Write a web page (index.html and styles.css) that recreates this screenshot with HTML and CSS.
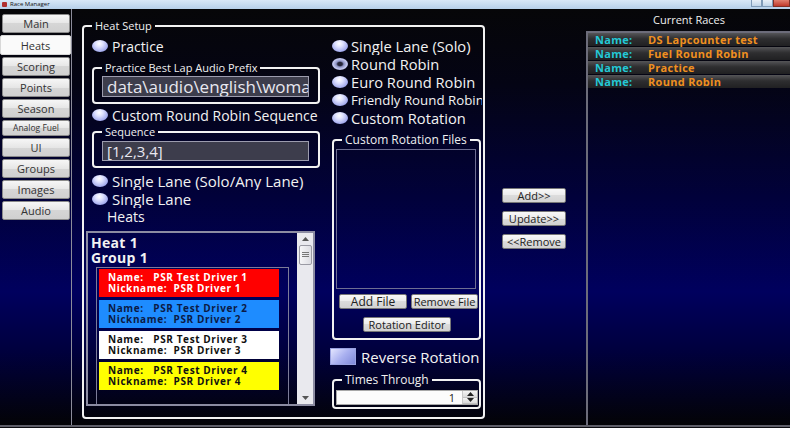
FILE: index.html
```html
<!DOCTYPE html>
<html lang="en">
<head>
    <meta charset="UTF-8">
    <title>Race Manager</title>
    <link rel="stylesheet" href="styles.css">
</head>
<body>

    <div class="titlebar">
        <span class="app-icon"></span>
        <span class="app-title">Race Manager</span>
        <div class="caption">
            <span class="cap-btn"></span>
            <span class="cap-btn"></span>
            <span class="cap-btn cap-close"></span>
        </div>
    </div>

    <div class="window">
        <nav class="tabs">
            <button class="tab">Main</button>
            <button class="tab active">Heats</button>
            <button class="tab">Scoring</button>
            <button class="tab">Points</button>
            <button class="tab">Season</button>
            <button class="tab tab-small">Analog Fuel</button>
            <button class="tab">UI</button>
            <button class="tab">Groups</button>
            <button class="tab">Images</button>
            <button class="tab">Audio</button>
        </nav>

        <div class="content">
            <fieldset class="group heat-setup">
                <legend>Heat Setup</legend>
                <div class="setup-cols">

                    <!-- left column -->
                    <div class="col-left">
                        <label class="radio-row"><span class="radio"></span>Practice</label>
                        <fieldset class="group prefix-group">
                            <legend>Practice Best Lap Audio Prefix</legend>
                            <div class="textbox">data\audio\english\woman</div>
                        </fieldset>
                        <label class="radio-row"><span class="radio"></span>Custom Round Robin Sequence</label>
                        <fieldset class="group sequence-group">
                            <legend>Sequence</legend>
                            <div class="textbox seq">[1,2,3,4]</div>
                        </fieldset>
                        <label class="radio-row wide gap-top"><span class="radio"></span>Single Lane (Solo/Any Lane)</label>
                        <label class="radio-row wide"><span class="radio"></span>Single Lane</label>
                        <div class="heats-label">Heats</div>

                        <div class="listbox">
                            <div class="list-body">
                                <div class="heat-title">Heat 1</div>
                                <div class="heat-title">Group 1</div>
                                <div class="group-box">
                                    <div class="driver red">
                                        <div class="line">Name:   PSR Test Driver 1</div>
                                        <div class="line">Nickname:  PSR Driver 1</div>
                                    </div>
                                    <div class="driver blue">
                                        <div class="line">Name:   PSR Test Driver 2</div>
                                        <div class="line">Nickname:  PSR Driver 2</div>
                                    </div>
                                    <div class="driver white">
                                        <div class="line">Name:   PSR Test Driver 3</div>
                                        <div class="line">Nickname:  PSR Driver 3</div>
                                    </div>
                                    <div class="driver yellow">
                                        <div class="line">Name:   PSR Test Driver 4</div>
                                        <div class="line">Nickname:  PSR Driver 4</div>
                                    </div>
                                </div>
                            </div>
                            <div class="scrollbar">
                                <span class="sb-arrow">
                                    <svg width="7" height="4" viewBox="0 0 7 4"><path d="M0 4 L3.5 0 L7 4 Z" fill="#555"/></svg>
                                </span>
                                <span class="sb-thumb">
                                    <svg width="7" height="6" viewBox="0 0 7 6"><path d="M0 0.5 H7 M0 2.5 H7 M0 4.5 H7" stroke="#777" stroke-width="1"/></svg>
                                </span>
                                <span class="sb-fill"></span>
                                <span class="sb-arrow">
                                    <svg width="7" height="4" viewBox="0 0 7 4"><path d="M0 0 L3.5 4 L7 0 Z" fill="#555"/></svg>
                                </span>
                            </div>
                        </div>
                    </div>

                    <!-- right column -->
                    <div class="col-right">
                        <label class="radio-row"><span class="radio"></span>Single Lane (Solo)</label>
                        <label class="radio-row"><span class="radio checked"></span>Round Robin</label>
                        <label class="radio-row"><span class="radio"></span>Euro Round Robin</label>
                        <label class="radio-row small"><span class="radio"></span>Friendly Round Robin</label>
                        <label class="radio-row"><span class="radio"></span>Custom Rotation</label>

                        <fieldset class="group rotation-group">
                            <legend>Custom Rotation Files</legend>
                            <div class="files-list"></div>
                            <div class="file-btns">
                                <button class="btn add-file">Add File</button>
                                <button class="btn remove-file">Remove File</button>
                            </div>
                            <button class="btn rotation-editor">Rotation Editor</button>
                        </fieldset>

                        <label class="check-row"><span class="checkbox"></span>Reverse Rotation</label>

                        <fieldset class="group times-group">
                            <legend>Times Through</legend>
                            <div class="numeric">
                                <span class="num-value">1</span>
                                <span class="spinner">
                                    <span class="spin">
                                        <svg width="7" height="4" viewBox="0 0 7 4"><path d="M0 4 L3.5 0 L7 4 Z" fill="#222"/></svg>
                                    </span>
                                    <span class="spin">
                                        <svg width="7" height="4" viewBox="0 0 7 4"><path d="M0 0 L3.5 4 L7 0 Z" fill="#222"/></svg>
                                    </span>
                                </span>
                            </div>
                        </fieldset>
                    </div>

                </div>
            </fieldset>

            <div class="move-btns">
                <button class="btn">Add&gt;&gt;</button>
                <button class="btn">Update&gt;&gt;</button>
                <button class="btn">&lt;&lt;Remove</button>
            </div>
        </div>

        <aside class="races">
            <div class="races-title">Current Races</div>
            <ul class="race-list">
                <li class="race"><span class="race-key">Name:</span><span class="race-name">DS Lapcounter test</span></li>
                <li class="race"><span class="race-key">Name:</span><span class="race-name">Fuel Round Robin</span></li>
                <li class="race"><span class="race-key">Name:</span><span class="race-name">Practice</span></li>
                <li class="race"><span class="race-key">Name:</span><span class="race-name">Round Robin</span></li>
            </ul>
        </aside>
    </div>

</body>
</html>
```

FILE: styles.css
```css
/* General styling */
* {
    box-sizing: border-box;
}

html, body {
    margin: 0;
    padding: 0;
}

body {
    width: 790px;
    height: 428px;
    overflow: hidden;
    background: #0b0b10;
    font-family: "Open Sans", Arial, sans-serif;
    color: #f2f2f2;
}

/* Window title bar */
.titlebar {
    height: 9px;
    display: flex;
    align-items: center;
    padding-left: 2px;
    background: linear-gradient(#d8e8f7, #b6d0ea);
    color: #111;
    font-size: 6px;
    line-height: 9px;
}

.app-icon {
    width: 5px;
    height: 5px;
    margin-right: 3px;
    background: #b03030;
    border-radius: 1px;
}

.caption {
    margin-left: auto;
    display: flex;
    height: 8px;
    align-self: flex-start;
}

.cap-btn {
    width: 11px;
    height: 7px;
    border: 1px solid #7f9bb8;
    border-top: none;
    background: linear-gradient(#e8f0f8, #c0d4e8);
}

.cap-close {
    width: 17px;
    background: linear-gradient(#e08070, #c0392b);
    border-color: #803028;
}

/* Main window body */
.window {
    display: flex;
    height: 418px;
    border-bottom: 2px solid #5e5e68;
    background: linear-gradient(to bottom, #060608 0%, #040414 18%, #01013a 45%, #00005e 68%, #00003e 82%, #030306 100%);
}

/* Left tabs */
.tabs {
    width: 72px;
    flex: none;
    display: flex;
    flex-direction: column;
    gap: 2px;
    padding-top: 5px;
    padding-left: 2px;
    border-right: 1px solid #8c8c9a;
}

.tab {
    width: 68px;
    height: 19px;
    padding: 0;
    border: 1px solid #8a8a8a;
    border-radius: 2px;
    background: linear-gradient(#f6f6f6, #e6e6e6 50%, #d6d6d6 50%, #d0d0d0);
    font-family: "Open Sans", Arial, sans-serif;
    font-size: 11px;
    color: #333;
    line-height: 17px;
}

.tab.active {
    width: 71px;
    height: 20px;
    margin-left: -2px;
    border-color: #d8d8d8;
    background: #fafafa;
}

.tab-small {
    height: 16px;
    font-size: 8.5px;
    line-height: 14px;
}

.content {
    flex: 1;
    display: flex;
    align-items: flex-start;
    padding-top: 11px;
    padding-left: 10px;
}

/* Group boxes */
.group {
    margin: 0;
    min-width: 0;
    border: 2px solid #f2f2f2;
    border-radius: 4px;
}

.group legend {
    padding: 0 3px;
    font-size: 11px;
    line-height: 12px;
    color: #f0f0f0;
}

.heat-setup {
    width: 403px;
    height: 399px;
    padding: 5px 1px 0 2px;
}

.heat-setup > legend {
    margin-left: 6px;
}

.setup-cols {
    display: flex;
    gap: 10px;
}

.col-left {
    width: 234px;
    display: flex;
    flex-direction: column;
}

.col-right {
    width: 152px;
    display: flex;
    flex-direction: column;
}

/* Radios */
.radio-row {
    display: flex;
    align-items: center;
    gap: 4px;
    height: 18px;
    font-size: 14px;
    white-space: nowrap;
    overflow: hidden;
}

.col-left .radio-row {
    margin-left: 6px;
}

.col-right .radio-row {
    margin-left: 2px;
    gap: 3px;
    font-size: 14.7px;
}

.col-right .radio-row.small {
    font-size: 13.3px;
}

.radio-row.wide {
    font-size: 15px;
}

.radio-row.gap-top {
    margin-top: 4px;
}

.radio {
    flex: none;
    width: 16px;
    height: 12px;
    border-radius: 50%;
    background: radial-gradient(ellipse at 45% 30%, #ffffff 0%, #dfe2ff 30%, #9ca4ec 75%, #7a84d4 100%);
}

.radio.checked {
    background: radial-gradient(ellipse at 50% 50%, #26263a 0, #26263a 20%, #8d93c4 34%, #c4c8ee 60%, #8a92cc 100%);
}

/* Text boxes */
.prefix-group,
.sequence-group {
    margin-left: 6px;
    width: 228px;
    padding: 0 2px 5px 8px;
}

.prefix-group {
    margin-top: 7px;
    margin-bottom: 2px;
}

.prefix-group > legend,
.sequence-group > legend {
    margin-left: 0;
}

.sequence-group {
    margin-top: 2px;
}

.textbox {
    margin-top: 2px;
    width: 207px;
    height: 21px;
    padding-left: 4px;
    border: 1px solid #9c9cae;
    background: #3d3d4c;
    color: #e8e8f0;
    font-size: 17px;
    line-height: 19px;
    white-space: nowrap;
    overflow: hidden;
}

.textbox.seq {
    margin-top: 3px;
    height: 20px;
    font-size: 15px;
    line-height: 18px;
}

.heats-label {
    height: 18px;
    margin-left: 21px;
    font-size: 14px;
    line-height: 18px;
}

/* Heats list */
.listbox {
    margin-top: 5px;
    width: 229px;
    height: 175px;
    display: flex;
    border: 2px solid #8c8ca2;
}

.list-body {
    flex: 1;
    overflow: hidden;
    padding: 2px 0 0 3px;
}

.heat-title {
    font-size: 14px;
    font-weight: 700;
    line-height: 15px;
    letter-spacing: 0.3px;
}

.group-box {
    margin: 2px 0 0 5px;
    width: 193px;
    height: 160px;
    padding: 1px 2px;
    border: 1px solid #7c7c98;
}

.driver {
    width: 180px;
    height: 28px;
    margin-bottom: 3px;
    padding: 3px 0 0 9px;
    font-size: 10px;
    font-weight: 700;
    line-height: 11px;
    letter-spacing: 0.6px;
}

.driver .line {
    height: 11px;
    white-space: pre;
}

.driver.red { background: #ff0000; color: #ffffff; }
.driver.blue { background: #1e8cff; color: #0c1a44; }
.driver.white { background: #ffffff; color: #111111; }
.driver.yellow { background: #ffff00; color: #111111; }

.scrollbar {
    width: 16px;
    flex: none;
    display: flex;
    flex-direction: column;
    align-items: center;
    background: #e9e9ee;
}

.sb-arrow {
    height: 12px;
    display: flex;
    align-items: center;
}

.sb-thumb {
    width: 13px;
    height: 20px;
    display: flex;
    align-items: center;
    justify-content: center;
    border: 1px solid #9a9aa4;
    border-radius: 2px;
    background: linear-gradient(to right, #f6f6f8, #dcdce2);
}

.sb-fill {
    flex: 1;
}

/* Rotation files */
.rotation-group {
    margin: 7px 0 0 2px;
    width: 149px;
    padding: 0 0 6px 2px;
}

.rotation-group > legend,
.times-group > legend {
    margin-left: 6px;
    font-size: 12px;
}

.files-list {
    margin-top: 3px;
    width: 140px;
    height: 140px;
    border: 1px solid #6e6e92;
}

.file-btns {
    display: flex;
    gap: 4px;
    margin: 5px 0 0 3px;
}

.btn {
    height: 15px;
    padding: 0;
    border: 1px solid #777;
    border-radius: 2px;
    background: linear-gradient(#f8f8f8, #ebebeb 50%, #dcdcdc 50%, #d2d2d2);
    font-family: "Open Sans", Arial, sans-serif;
    font-size: 11px;
    line-height: 13px;
    color: #222;
}

.add-file {
    width: 68px;
    font-size: 12px;
}

.remove-file {
    width: 67px;
}

.rotation-editor {
    display: block;
    width: 88px;
    margin: 8px 0 0 27px;
}

.check-row {
    display: flex;
    align-items: center;
    gap: 5px;
    height: 17px;
    margin-top: 8px;
    font-size: 15px;
    white-space: nowrap;
}

.checkbox {
    width: 26px;
    height: 17px;
    border: 1px solid #9aa2e0;
    background: linear-gradient(135deg, #e4e6ff, #a9b0f0 50%, #7f88d8);
}

/* Times through */
.times-group {
    margin: 9px 0 0 2px;
    width: 149px;
    padding: 0 0 2px 2px;
}

.numeric {
    margin-top: 4px;
    width: 142px;
    height: 15px;
    display: flex;
    border: 1px solid #a8a8a8;
    background: #fcfcfc;
    color: #222;
}

.num-value {
    flex: 1;
    text-align: right;
    padding-right: 7px;
    font-size: 11px;
    line-height: 13px;
}

.spinner {
    width: 15px;
    display: flex;
    flex-direction: column;
    border-left: 1px solid #c8c8c8;
}

.spin {
    flex: 1;
    display: flex;
    align-items: center;
    justify-content: center;
    background: linear-gradient(#f4f4f4, #dadada);
    border-bottom: 1px solid #c0c0c0;
}

/* Middle buttons */
.move-btns {
    display: flex;
    flex-direction: column;
    gap: 8px;
    margin: 168px 0 0 17px;
}

.move-btns .btn {
    width: 64px;
}

/* Current races */
.races {
    width: 204px;
    flex: none;
    display: flex;
    flex-direction: column;
    padding-top: 5px;
}

.races-title {
    font-size: 11px;
    line-height: 12px;
    text-align: center;
    padding-left: 2px;
    color: #f0f0f0;
}

.race-list {
    flex: 1;
    list-style: none;
    margin: 5px 0 0;
    padding: 0;
    border-top: 2px solid #6c6c7a;
    border-left: 2px solid #6c6c7a;
}

.race {
    height: 13px;
    margin-bottom: 1px;
    display: flex;
    padding-left: 7px;
    background: linear-gradient(#555558, #2e2e30 45%, #202022);
    font-size: 11px;
    font-weight: 700;
    line-height: 13px;
    letter-spacing: 0.3px;
}

.race-key {
    width: 53px;
    color: #24c8d6;
}

.race-name {
    color: #f09020;
}
```
